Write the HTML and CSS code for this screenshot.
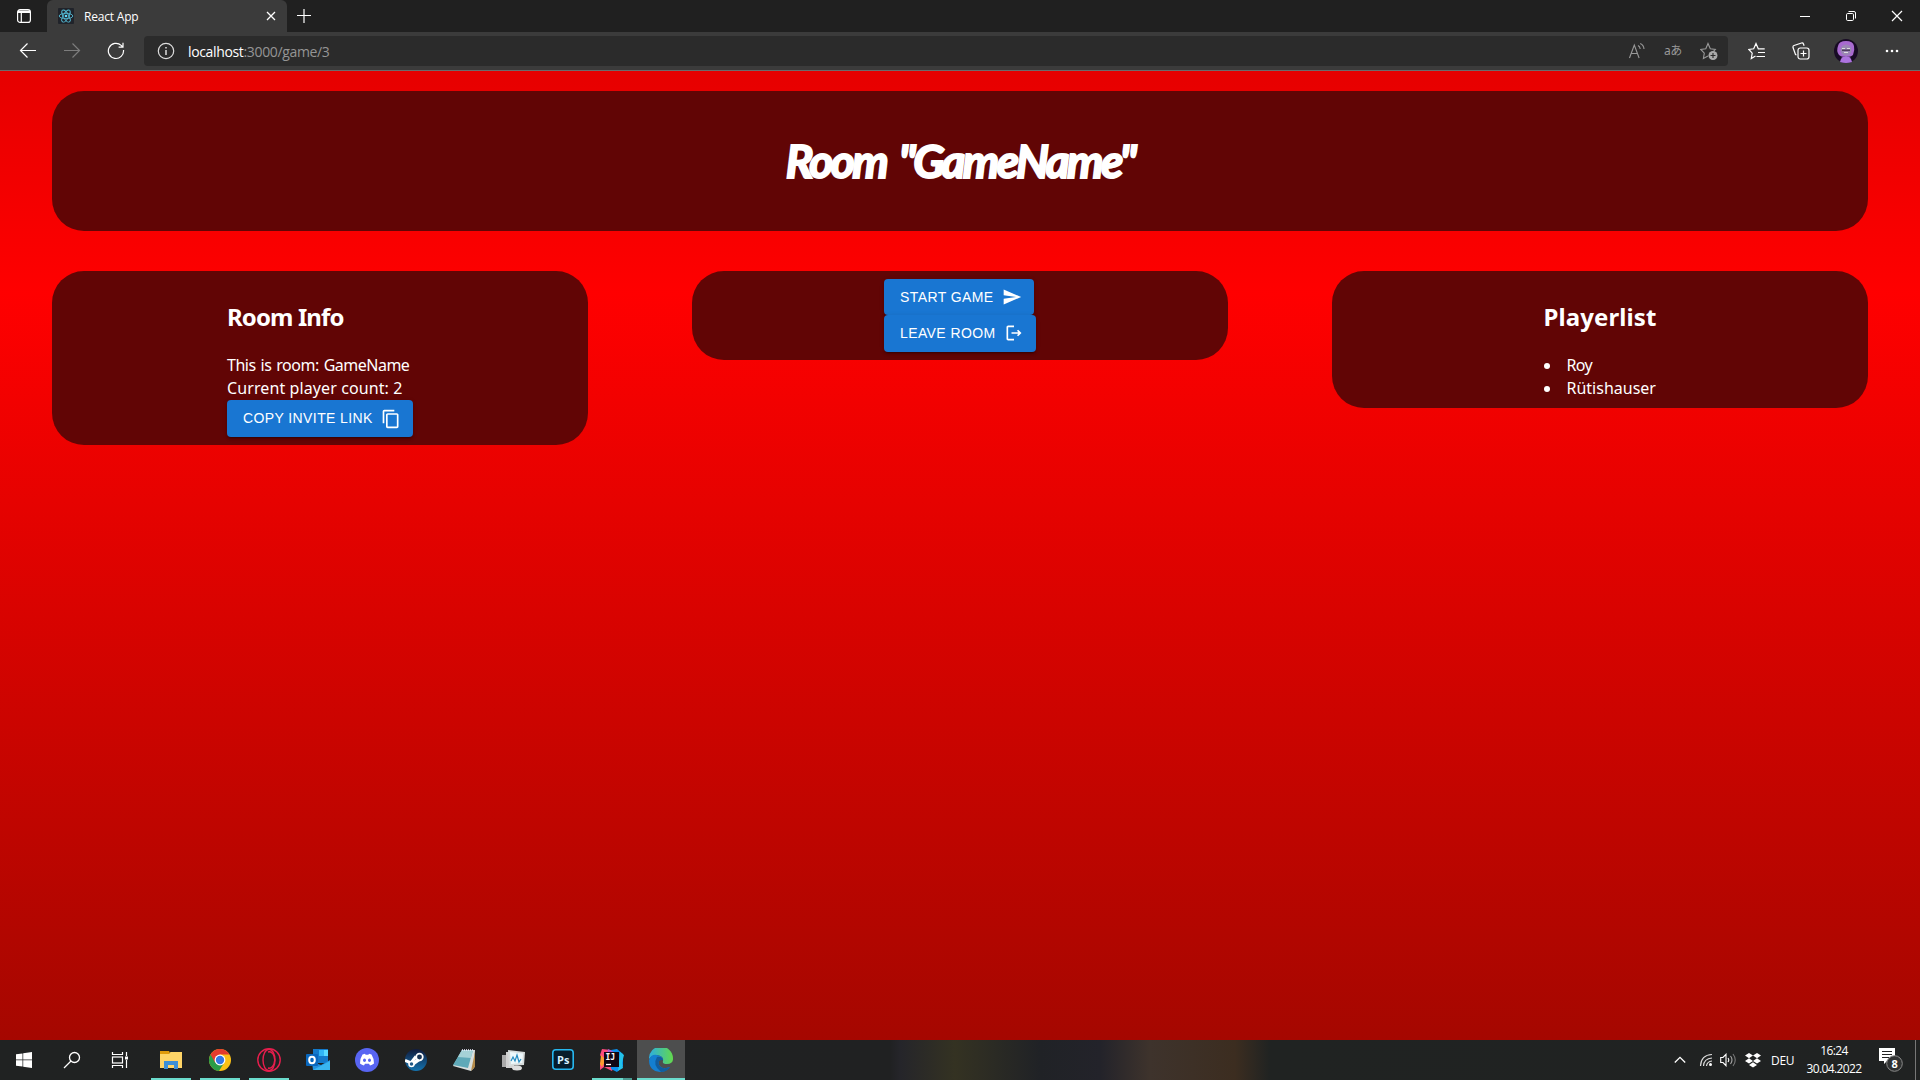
FILE: index.html
```html
<!DOCTYPE html>
<html lang="en">
<head>
<meta charset="utf-8">
<title>React App</title>
<link rel="stylesheet" href="styles.css">
</head>
<body>
<div class="tabbar">
  <div class="tab-menu"><svg width="16" height="16" viewBox="0 0 16 16" fill="none" stroke="#fff" stroke-width="1.2"><rect x="1.6" y="1.6" width="12.8" height="12.8" rx="2.5"/><path d="M2 3.2h12M2 4.4h12M5.3 5v9.5"/></svg></div>
  <div class="tab">
    <svg class="favicon" width="16" height="16" viewBox="0 0 16 16"><rect width="16" height="16" rx="1" fill="#20232a"/><g fill="none" stroke="#53b9d3" stroke-width=".9"><ellipse cx="8" cy="8" rx="6.8" ry="2.7"/><ellipse cx="8" cy="8" rx="6.8" ry="2.7" transform="rotate(60 8 8)"/><ellipse cx="8" cy="8" rx="6.8" ry="2.7" transform="rotate(120 8 8)"/></g><circle cx="8" cy="8" r="1.3" fill="#61dafb"/></svg>
    <span class="tab-title">React App</span>
    <svg width="10" height="10" viewBox="0 0 10 10" stroke="#fff" stroke-width="1.3"><path d="M1 1l8 8M9 1l-8 8"/></svg>
  </div>
  <svg class="new-tab" width="14" height="14" viewBox="0 0 14 14" stroke="#fff" stroke-width="1.2"><path d="M0 6.500h14M7 0v14"/></svg>
  <div class="window-buttons">
    <svg width="46" height="32" viewBox="0 0 46 32"><path d="M18 16.500h10" stroke="#fff"/></svg>
    <svg width="46" height="32" viewBox="0 0 46 32" fill="none" stroke="#fff"><rect x="18.500" y="13.500" width="7" height="7" rx="1.200"/><path d="M20.500 11.500h5.500q1.500 0 1.500 1.500v5.500"/></svg>
    <svg width="46" height="32" viewBox="0 0 46 32" stroke="#fff" stroke-width="1.2"><path d="M18 11l10 10M28 11l-10 10"/></svg>
  </div>
</div>
<div class="toolbar">
  <div class="nav">
    <svg width="18" height="18" viewBox="0 0 18 18" fill="none" stroke="#fff" stroke-width="1.200"><path d="M17 8.500H1.500M8.500 1.500l-7 7 7 7"/></svg>
    <svg width="18" height="18" viewBox="0 0 18 18" fill="none" stroke="#7d7d7d" stroke-width="1.200"><path d="M1 8.500h15.500M9.500 1.500l7 7-7 7"/></svg>
    <svg width="18" height="18" viewBox="0 0 18 18" fill="none" stroke="#fff" stroke-width="1.200"><path d="M16.500 8a7.600 7.600 0 1 1-2.300-4.600l1.600 1.600M16 .8V5.200h-4.400"/></svg>
  </div>
  <div class="address">
    <svg width="18" height="18" viewBox="0 0 18 18" fill="none" stroke="#ddd" stroke-width="1.200"><circle cx="9" cy="9" r="7.700"/><path d="M9 8v5M9 5v1.500" stroke-width="1.500"/></svg>
    <span class="url"><b>localhost</b>:3000/game/3</span>
    <div class="address-icons">
      <svg width="18" height="18" viewBox="0 0 18 18" fill="none" stroke="#999" stroke-width="1.100"><path d="M1.500 16L6.300 3l4.800 13M3 11.500h6.500M10 3.500q2 1 2.200 3.500M12.200 1.500q3.500 1.500 3.800 5.500"/></svg>
      <span class="translate">aあ</span>
      <svg width="18" height="18" viewBox="0 0 18 18" fill="none" stroke="#999" stroke-width="1.100"><path d="M8 14l-4.600 2.500.9-5.300L.8 7.500l5-.7L8 1.500l2.300 5.300 5 .7-1.800 1.800"/><circle cx="13" cy="13.500" r="4.500" fill="#aaa" stroke="none"/><path d="M13 11v5M10.500 13.500h5" stroke="#2b2b2b"/></svg>
    </div>
  </div>
  <div class="actions">
    <svg width="18" height="18" viewBox="0 0 18 18" fill="none" stroke="#fff" stroke-width="1.200"><path d="M7.500 14l-4.200 2.500.9-5.300L.9 7.500l4.800-.7L8 1.500l2.300 5.300h6.400M10 10.500h7M8.500 14.500h8.500"/></svg>
    <svg width="18" height="18" viewBox="0 0 18 18" fill="none" stroke="#fff" stroke-width="1.200"><rect x="6" y="6" width="11" height="11" rx="2.200"/><path d="M11.500 8.500v6M8.500 11.500h6M4.500 13l-1-.5L1 5.500Q.7 4 2 3.500L9.500 1q1.500-.4 2 1l.6 1.800"/></svg>
    <svg width="24" height="24" viewBox="0 0 24 24"><circle cx="12" cy="12" r="12" fill="#180b25"/><path d="M4 7q1-5 8-5t8 5q1 4-1 9-3 3-7 1-4 2-7-1Q2 12 4 7z" fill="#a86ad0"/><ellipse cx="12" cy="11" rx="5.500" ry="5.500" fill="#9b86b5"/><path d="M8 10.500h8v1.500H8z" fill="#4f405f"/><path d="M8 9.500h3M13 9.500h3M10 13.500h4" stroke="#ddd"/><path d="M6 23q1-6 6-6t6 6q-6 2-12 0z" fill="#ad73df"/></svg>
    <svg width="18" height="18" viewBox="0 0 18 18" fill="#fff"><circle cx="4" cy="9" r="1.300"/><circle cx="9" cy="9" r="1.300"/><circle cx="14" cy="9" r="1.300"/></svg>
  </div>
</div>
<main class="page">
  <header class="panel banner"><h1>Room "GameName"</h1></header>
  <div class="columns">
    <section class="panel">
      <div class="content">
        <h2 class="info-title">Room Info</h2>
        <div class="info-name">This is room: GameName</div>
        <div class="info-count">Current player count: 2</div>
        <button class="btn copy">COPY INVITE LINK<svg width="20" height="20" viewBox="0 0 24 24"><path d="M16 1H4c-1.100 0-2 .9-2 2v14h2V3h12V1zm3 4H8c-1.100 0-2 .9-2 2v14c0 1.100.9 2 2 2h11c1.100 0 2-.9 2-2V7c0-1.100-.9-2-2-2zm0 16H8V7h11v14z"/></svg></button>
      </div>
    </section>
    <section class="panel controls">
      <div class="content">
        <button class="btn start">START GAME<svg width="20" height="20" viewBox="0 0 24 24"><path d="M2.010 21L23 12 2.010 3 2 10l15 2-15 2z"/></svg></button>
        <button class="btn leave">LEAVE ROOM<svg width="20" height="20" viewBox="0 0 24 24"><path d="M17 8l-1.410 1.410L17.170 11H9v2h8.170l-1.580 1.580L17 16l4-4zM5 5h7V3H5c-1.100 0-2 .9-2 2v14c0 1.100.9 2 2 2h7v-2H5V5z"/></svg></button>
      </div>
    </section>
    <section class="panel">
      <div class="content players">
        <h2 class="list-title">Playerlist</h2>
        <ul><li class="short">Roy</li><li>Rütishauser</li></ul>
      </div>
    </section>
  </div>
</main>
<footer class="taskbar">
  <div class="apps">
    <div class="app"><svg width="16" height="16" viewBox="0 0 16 16" fill="#fff"><path d="M0 2.300l6.500-.9v6.200H0zM7.200 1.300L16 0v7.600H7.200zM0 8.300h6.500v6.300L0 13.700zM7.200 8.300H16V16l-8.800-1.300z"/></svg></div>
    <div class="app"><svg width="18" height="18" viewBox="0 0 18 18" fill="none" stroke="#fff" stroke-width="1.300"><circle cx="11.500" cy="6.500" r="5"/><path d="M8 10l-7 7"/></svg></div>
    <div class="app"><svg width="18" height="16" viewBox="0 0 18 16" fill="none" stroke="#fff" stroke-width="1.200"><path d="M1.500 0v2.500h10V0M1.500 16v-2.500h10V16M15.500 0v4M15.500 8v8"/><rect x="1.500" y="5" width="10" height="6"/><path d="M14 6h3" stroke-width="3"/></svg></div>
    <div class="app running"><svg width="22" height="18" viewBox="0 0 22 18"><path d="M0 0h9l1 2-1 2H0z" fill="#e09b0b"/><path d="M0 3h9l1.500-2H22v16H0z" fill="#ffd567"/><path d="M4 18v-8h14v8h-4v-4H8v4z" fill="#3c8fd6"/></svg></div>
    <div class="app running"><svg width="22" height="22" viewBox="0 0 22 22"><circle cx="11" cy="11" r="11" fill="#fbc116"/><path d="M11 11L1.500 5.500A11 11 0 0 0 10 22l5.300-8.500z" fill="#2a9c48"/><path d="M1.500 5.500A11 11 0 0 1 20.500 5.500H11l-4.800 8.300z" fill="#e33b2e"/><circle cx="11" cy="11" r="5.400" fill="#fff"/><circle cx="11" cy="11" r="4.200" fill="#3478e5"/></svg></div>
    <div class="app running"><svg width="24" height="24" viewBox="0 0 24 24" fill="none" stroke="#e61e4d" stroke-width="1.400"><circle cx="12" cy="12" r="11.200"/><ellipse cx="12" cy="12" rx="6" ry="10.800"/><path d="M11 4q4-1 6 4 1.500 4 0 8-2 5-6 4"/></svg></div>
    <div class="app"><svg width="24" height="22" viewBox="0 0 24 22"><path d="M7 0h15v14H7z" fill="#1379ca"/><path d="M13 1h9v6h-9z" fill="#31b5f5"/><path d="M18 1h4v6h-4z" fill="#58daff"/><path d="M6 13l9 3 9-5v10H7z" fill="#2291df"/><path d="M7 21l17-9v9z" fill="#39b5f0"/><rect y="5" width="12" height="12" rx="1" fill="#0967bd"/><ellipse cx="6" cy="11" rx="2.800" ry="3.200" fill="none" stroke="#fff" stroke-width="2"/></svg></div>
    <div class="app"><svg width="24" height="24" viewBox="0 0 24 24"><circle cx="12" cy="12" r="12" fill="#5865f2"/><path d="M7.500 6.500l2.500-.8.600 1h2.800l.6-1 2.500.8q2.800 4.500 2.500 9-2 1.600-4 2l-1-1.700h-4l-1 1.700q-2-.4-4-2-.3-4.500 2.500-9z" fill="#fff"/><ellipse cx="9.500" cy="12.200" rx="1.500" ry="1.700" fill="#5865f2"/><ellipse cx="14.500" cy="12.200" rx="1.500" ry="1.700" fill="#5865f2"/></svg></div>
    <div class="app"><svg width="22" height="22" viewBox="0 0 22 22"><defs><linearGradient id="steam" x2="0" y2="1"><stop stop-color="#111b3c"/><stop offset="1" stop-color="#1473af"/></linearGradient></defs><circle cx="11" cy="11" r="11" fill="url(#steam)"/><path d="M0 11.500l6 2.500 5-6.500" stroke="#fff" stroke-width="3" fill="none"/><path d="M7 15.500l7.500-5.500" stroke="#fff" stroke-width="3.500"/><circle cx="14.500" cy="8" r="3.300" fill="#163354" stroke="#fff" stroke-width="1.700"/><circle cx="6.500" cy="15" r="2.500" fill="#225a87" stroke="#fff" stroke-width="1.500"/></svg></div>
    <div class="app"><svg width="24" height="22" viewBox="0 0 24 22"><path d="M9 1h13l-1 18-3 3-18-5z" fill="#d8dedd"/><path d="M18 22l4-4V3z" fill="#b38a4a"/><path d="M9 1h11l-5 18L0 16z" fill="#5fa9b8"/><path d="M9 1h11l-2 8L5 8z" fill="#a5d1d6"/><path d="M9 1h12" stroke="#eef" stroke-width="1.500" stroke-dasharray="1 1"/></svg></div>
    <div class="app"><svg width="24" height="22" viewBox="0 0 24 22"><path d="M0 6h8v12H0z" fill="#aaa"/><path d="M4 3h8v16H4z" fill="#d0d0d0"/><path d="M6 1l17 2-1 13-15 1z" fill="#d7dcdc"/><path d="M8 3l13 1.500-.7 9.500L9 15z" fill="#edf8fb"/><path d="M9 12l2-4 2 4 2-6 2 7 2-3" fill="none" stroke="#258bc1" stroke-width="1.200"/><ellipse cx="15" cy="19" rx="5" ry="2.500" fill="#ddd"/></svg></div>
    <div class="app"><svg width="22" height="22" viewBox="0 0 22 22"><rect x=".8" y=".8" width="20.400" height="19.400" rx="3" fill="#071d2b" stroke="#27b7ef" stroke-width="1.600"/><text x="5" y="15" class="ps">Ps</text></svg></div>
    <div class="app running split"><svg width="24" height="24" viewBox="0 0 24 24"><path d="M2 1l9 1 5 10-4 11-8-4-4 3V15l3-3-3-5z" fill="#fc4b7c"/><path d="M1 7l5 5-4 7-2-3z" fill="#fb9b31"/><path d="M11 2l6-1 6 5v12l-6 6-6-3z" fill="#0b91ed"/><path d="M20 4l4 3-2 8 1 5-5 3z" fill="#24c3ea"/><path d="M8 1l8 4-9 2z" fill="#a95bd2"/><rect x="4" y="4" width="15" height="15" fill="#100713"/><text x="5.500" y="12" class="ij">IJ</text><path d="M6 16.500h5" stroke="#fff" stroke-width="1.300"/></svg></div>
    <div class="app running active"><svg width="24" height="24" viewBox="0 0 24 24"><defs><linearGradient id="edgeTop"><stop stop-color="#2daee0"/><stop offset="1" stop-color="#63d94c"/></linearGradient></defs><path d="M0 11A12 12 0 0 1 24 10q.5 6-6 6-5 0-4-3Q15 8 8 7 3 7 0 11z" fill="url(#edgeTop)"/><path d="M0 12Q2 6 8 7q6 1 6 5-6-1-4 5 3 5 11 2-4 5-10 5Q0 23 0 12z" fill="#147fd0"/><path d="M8 9q-5 8 4 15 6 0 9-5-8 3-11-2-2-5 4-5-1-4-6-3z" fill="#125d9d"/></svg></div>
  </div>
  <div class="tray">
    <svg width="12" height="8" viewBox="0 0 12 8" fill="none" stroke="#fff" stroke-width="1.300"><path d="M.8 6.500L6 1.300l5.200 5.200"/></svg>
    <svg class="wifi" width="14" height="14" viewBox="0 0 14 14" fill="none" stroke="#ddd" stroke-width="1.200"><path d="M1.500 13Q2 2 13 1.500M4.500 13Q5 5.500 13 5M7.500 13Q8 8.500 13 8"/><circle cx="11.500" cy="11.500" r="1.500" fill="#fff" stroke="none"/></svg>
    <svg class="sound" width="17" height="14" viewBox="0 0 17 14" fill="none" stroke="#fff" stroke-width="1.100"><path d="M.7 4.500H3L6 1.300v11.400L3 9.500H.7zM8 5q1.500 2 0 4"/><path d="M10.500 3q3 4 0 8" stroke="#aaa"/><path d="M13 1q4.500 6 0 12" stroke="#777"/></svg>
    <svg class="dropbox" width="16" height="15" viewBox="0 0 16 15" fill="#fff"><path d="M4 0l4 2.600-4 2.600-4-2.600zM12 0l4 2.600-4 2.600-4-2.600zM4 5.300l4 2.600-4 2.600-4-2.600zM12 5.300l4 2.600-4 2.600-4-2.600zM8 9.300l4 2.600L8 14.500l-4-2.600z"/></svg>
    <span class="lang">DEU</span>
    <div class="clock"><span class="time">16:24</span><span>30.04.2022</span></div>
    <svg class="notice" width="26" height="26" viewBox="0 0 26 26"><path d="M1 1h16v13H9l-3 3v-3H1z" fill="#fff"/><path d="M4 4.500h10M4 7.500h10M4 10.500h7" stroke="#222"/><circle cx="16.500" cy="16.500" r="7.800" fill="#303232" stroke="#8a8a8a"/><text x="16.500" y="20.500" class="badge">8</text></svg>
    <span class="peek"></span>
  </div>
</footer>
</body>
</html>
```
FILE: styles.css
```css
* { box-sizing: border-box; }
body { margin: 0; height: 1080px; overflow: hidden; display: flex; flex-direction: column; font-family: "Noto Sans", "Noto Sans CJK JP", sans-serif; color: #fff; }
svg { display: block; flex: none; }

.tabbar { height: 32px; flex: none; background: #202020; display: flex; align-items: center; }
.tab-menu { width: 47px; padding-left: 16px; }
.tab { width: 240px; height: 32px; background: #3b3b3b; border-radius: 6px 6px 0 0; display: flex; align-items: center; padding: 0 11px; }
.tab-title { flex: 1; margin-left: 10px; font: 12px "Open Sans", sans-serif; letter-spacing: -0.2px; }
.new-tab { margin-left: 10px; }
.window-buttons { margin-left: auto; display: flex; }

.toolbar { height: 39px; margin-bottom: -1px; flex: none; background: #3b3b3b; border-bottom: 1px solid #6b6b6b; display: flex; align-items: center; }
.nav { display: flex; gap: 26px; padding-left: 19px; width: 144px; }
.address { width: 1584px; height: 30px; border-radius: 4px; background: #2b2b2b; display: flex; align-items: center; padding: 0 10px 0 13px; }
.url { margin-left: 13px; font: 14px "Open Sans", sans-serif; letter-spacing: -0.35px; color: #959595; }
.url b { font-weight: 400; color: #fff; }
.address-icons { margin-left: auto; display: flex; align-items: center; gap: 18px; color: #999; }
.translate { width: 18px; font-size: 12px; line-height: 18px; white-space: nowrap; letter-spacing: -0.5px; }
.actions { display: flex; align-items: center; padding-left: 20px; gap: 26px; }
.actions svg:nth-child(3) { margin-left: -2px; }
.actions svg:nth-child(4) { margin-left: -1px; }

.page { flex: 1; margin-top: 1px; padding: 20px 52px 0; background: linear-gradient(#e60000 0, #ff0000 23%, #a50700 100%); }
.panel { background: #610505; border-radius: 32px; }
.banner { height: 140px; display: flex; justify-content: center; align-items: center; }
h1 { margin: 0; font: italic 700 46px/60px Lato, cursive; letter-spacing: -2.6px; word-spacing: 5px; -webkit-text-stroke: 2px #fff; stroke-linejoin: round; }
.columns { display: grid; grid-template-columns: repeat(3, 536px); justify-content: space-between; align-items: start; margin-top: 40px; }
.columns .panel { display: flex; justify-content: center; padding-bottom: 8px; }
.columns .controls { padding: 8px 0; }
.content { display: flex; flex-direction: column; align-items: flex-start; font-size: 16px; line-height: 23px; }
h2 { margin: 28px 0 20px; font-size: 24px; line-height: 35px; font-weight: 700; }
.info-title { letter-spacing: -0.9px; }
.list-title { letter-spacing: 0.1px; }
.info-name { letter-spacing: -0.5px; word-spacing: 1.3px; }
.info-count { letter-spacing: 0.1px; }
ul { margin: 0; padding: 0; list-style: none; }
li { display: flex; align-items: center; gap: 17px; }
li::before { content: ""; width: 6px; height: 6px; border-radius: 50%; background: #fff; }
.short { letter-spacing: -0.6px; }
.btn { height: 37px; display: flex; align-items: center; justify-content: space-between; padding: 0 12px 2px 16px; border: 0; border-radius: 4px; background: #1976d2; color: #fff; font: 14px "Liberation Sans", Arial, sans-serif; letter-spacing: .4px; white-space: nowrap; box-shadow: 0 3px 1px -2px rgba(0,0,0,.2), 0 2px 2px rgba(0,0,0,.14), 0 1px 5px rgba(0,0,0,.12); }
.btn svg { fill: #fff; }
.btn.start { width: 150px; height: 36px; padding-bottom: 0; }
.leave { width: 152px; }
.copy { width: 186px; }
.copy svg { position: relative; top: 1px; }

.taskbar { height: 40px; flex: none; display: flex; background: linear-gradient(90deg, #202222 0, #202122 890px, #25252a 900px, #343222 955px, #202226 1040px, #23232a 1100px, #3e332c 1150px, #3c2d20 1235px, #202322 1270px, #202222 1920px); }
.apps { display: flex; gap: 1px; }
.app { width: 48px; height: 40px; display: flex; align-items: center; justify-content: center; }
.app:nth-child(-n+3) { width: 47px; padding-left: 1px; }
.app:nth-child(3) { margin-right: 3px; }
.running { background: linear-gradient(#6bdccd, #6bdccd) center bottom / 40px 2px no-repeat; }
.split { background-image: linear-gradient(90deg, #6bdccd 31px, #4a9a90 31px); }
.active { background: linear-gradient(#6bdccd, #6bdccd) bottom / 100% 2px no-repeat #4d4e4e; }
.ps { font: 700 11px "Open Sans", sans-serif; fill: #d8f1ff; }
.ij { font: 700 8px "DejaVu Sans Mono", monospace; fill: #fff; }
.tray { margin-left: auto; display: flex; align-items: center; font: 12px "Open Sans", sans-serif; letter-spacing: -.3px; }
.wifi { margin-left: 13px; }
.sound { margin-left: 7px; }
.dropbox { margin-left: 8px; }
.lang { margin-left: 10px; width: 23px; }
.clock { margin-left: 12px; width: 56px; display: flex; flex-direction: column; align-items: center; line-height: 18px; letter-spacing: -.6px; }
.notice { margin-left: 16px; }
.badge { font: 700 11px "Open Sans", sans-serif; text-anchor: middle; fill: #fff; }
.peek { width: 5px; height: 40px; margin-left: 11px; border-left: 1px solid #777; }
```
